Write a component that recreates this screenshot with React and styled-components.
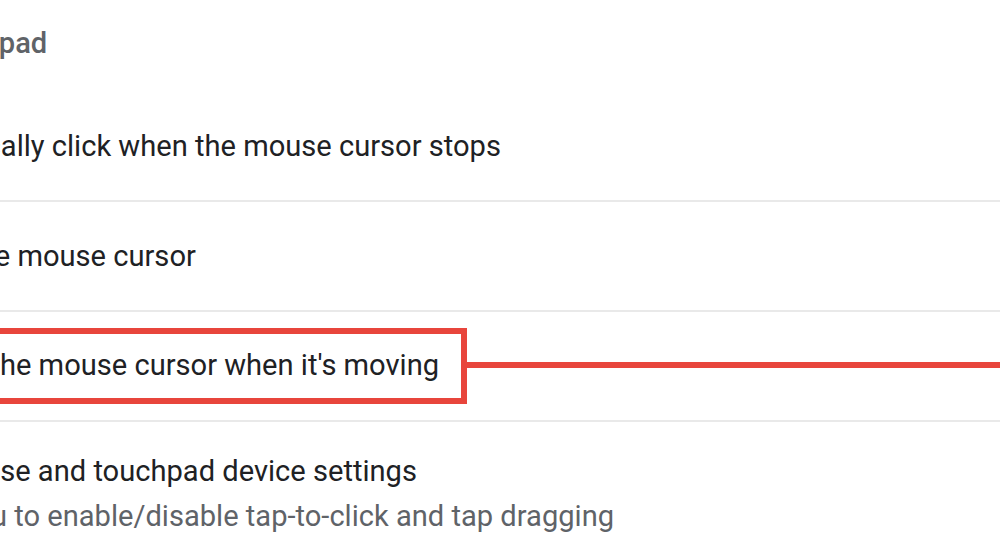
import React from 'react'
import styled, { createGlobalStyle } from 'styled-components'

const GlobalStyle = createGlobalStyle`
  html, body {
    margin: 0;
    padding: 0;
    background: #fff;
  }
  body {
    font-family: Roboto, "Noto Sans", "Liberation Sans", sans-serif;
    overflow: hidden;
  }
`

const Page = styled.div`
  width: 1000px;
  height: 559px;
  overflow: hidden;
  background: #fff;
`

const Section = styled.section`
  margin-left: -133px;
  display: flex;
  flex-direction: column;
`

const Heading = styled.h2`
  box-sizing: border-box;
  height: 92px;
  margin: 0 0 0 ${p => p.$shift || 0}px;
  padding-bottom: 6px;
  display: flex;
  align-items: center;
  font-size: 29.1px;
  font-weight: 500;
  line-height: 35px;
  color: #5f6368;
  white-space: nowrap;
`

const Row = styled.div`
  box-sizing: border-box;
  height: ${p => (p.$tall ? 'auto' : '110px')};
  padding: ${p => (p.$tall ? '32px 0 0' : '0')};
  border-bottom: ${p => (p.$last ? 'none' : '2px solid #e9e9e9')};
  display: flex;
  flex-direction: column;
  justify-content: ${p => (p.$tall ? 'flex-start' : 'center')};
  align-items: flex-start;
  white-space: nowrap;
`

const Label = styled.div`
  font-size: 29.1px;
  line-height: 35px;
  color: #202124;
`

const SubLabel = styled.div`
  margin-top: 10px;
  font-size: 29.1px;
  line-height: 35px;
  color: #5f6368;
`

// red annotation box with a pointer line running off to the right
const Callout = styled.div`
  position: relative;
  margin-left: -28px;
  padding: 14px 22px 15px;
  border: 6px solid #e8453c;

  &::after {
    content: '';
    position: absolute;
    left: 100%;
    top: 28px;
    width: 700px;
    height: 6px;
    background: #e8453c;
  }
`

const App = () => {
  return (
    <Page>
      <GlobalStyle />
      <Section>
        <Heading $shift={-93}>Mouse and touchpad</Heading>

        <Row>
          <Label>Automatically click when the mouse cursor stops</Label>
        </Row>

        <Row>
          <Label>Show large mouse cursor</Label>
        </Row>

        <Row>
          <Callout>
            <Label>Highlight the mouse cursor when it's moving</Label>
          </Callout>
        </Row>

        <Row $tall $last>
          <Label>Open mouse and touchpad device settings</Label>
          <SubLabel>Allows you to enable/disable tap-to-click and tap dragging</SubLabel>
        </Row>
      </Section>
    </Page>
  )
}

export default App
